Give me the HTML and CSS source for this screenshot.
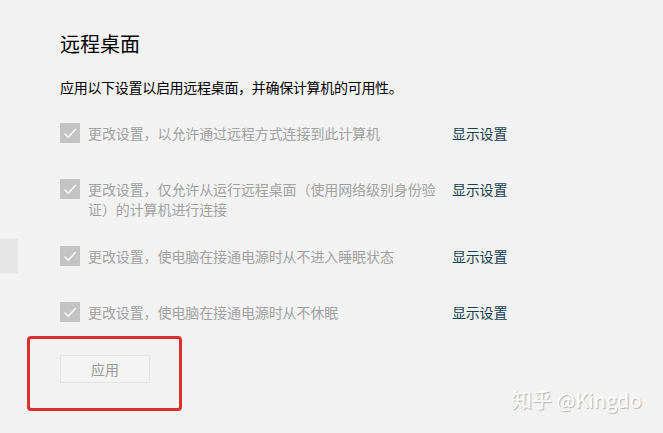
FILE: index.html
```html
<!DOCTYPE html>
<html lang="zh-CN">
<head>
    <meta charset="UTF-8">
    <meta name="viewport" content="width=device-width, initial-scale=1.0">
    <title>远程桌面</title>
    <link rel="stylesheet" href="styles.css">
</head>
<body>
    <div class="side-tab"></div>
    <div class="page">
        <h1 class="title">远程桌面</h1>
        <p class="intro">应用以下设置以启用远程桌面，并确保计算机的可用性。</p>

        <div class="settings">
            <div class="setting">
                <span class="check"><svg viewBox="0 0 20 20" width="20" height="20"><path d="M4.5 10.5 L8.3 14.2 L15.8 6" fill="none" stroke="#fff" stroke-width="1.3"/></svg></span>
                <span class="label">更改设置，以允许通过远程方式连接到此计算机</span>
                <a class="show" href="#">显示设置</a>
            </div>
            <div class="setting">
                <span class="check"><svg viewBox="0 0 20 20" width="20" height="20"><path d="M4.5 10.5 L8.3 14.2 L15.8 6" fill="none" stroke="#fff" stroke-width="1.3"/></svg></span>
                <span class="label">更改设置，仅允许从运行远程桌面（使用网络级别身份验证）的计算机进行连接</span>
                <a class="show" href="#">显示设置</a>
            </div>
            <div class="setting">
                <span class="check"><svg viewBox="0 0 20 20" width="20" height="20"><path d="M4.5 10.5 L8.3 14.2 L15.8 6" fill="none" stroke="#fff" stroke-width="1.3"/></svg></span>
                <span class="label">更改设置，使电脑在接通电源时从不进入睡眠状态</span>
                <a class="show" href="#">显示设置</a>
            </div>
            <div class="setting">
                <span class="check"><svg viewBox="0 0 20 20" width="20" height="20"><path d="M4.5 10.5 L8.3 14.2 L15.8 6" fill="none" stroke="#fff" stroke-width="1.3"/></svg></span>
                <span class="label">更改设置，使电脑在接通电源时从不休眠</span>
                <a class="show" href="#">显示设置</a>
            </div>
        </div>

        <div class="actions">
            <button class="apply" disabled>应用</button>
            <div class="highlight"></div>
        </div>
    </div>
    <div class="watermark">知乎 @Kingdo</div>
</body>
</html>
```

FILE: styles.css
```css
body {
    margin: 0;
    background-color: #f2f2f2;
    font-family: "Noto Sans CJK SC", "Noto Sans", sans-serif;
    color: #000;
    width: 663px;
    height: 433px;
    overflow: hidden;
    position: relative;
}
.page {
    padding: 30px 0 0 60px;
}
.title {
    margin: 0;
    font-size: 20px;
    font-weight: normal;
    line-height: 28px;
}
.intro {
    margin: 19px 0 0;
    font-size: 14px;
    line-height: 20px;
    letter-spacing: -0.3px;
}
.settings {
    margin-top: 26px;
    display: flex;
    flex-direction: column;
    gap: 27px;
}
.setting {
    display: flex;
    align-items: flex-start;
    min-height: 29px;
    font-size: 14px;
    line-height: 20px;
}
.check {
    width: 20px;
    height: 20px;
    flex: none;
    background-color: #c3c3c3;
    display: flex;
}
.label {
    width: 356px;
    margin-left: 8px;
    color: #a2a2a2;
    letter-spacing: -0.1px;
}
.show {
    margin-left: 8px;
    color: #17404f;
    text-decoration: none;
    letter-spacing: -0.2px;
}
.actions {
    position: relative;
    margin-top: 24px;
}
.apply {
    width: 90px;
    height: 28px;
    background-color: #f3f3f3;
    border: 1px solid #e4e4e4;
    color: #9a9a9a;
    font-family: inherit;
    font-size: 14px;
    padding: 0;
}
/* red annotation box drawn over the screenshot */
.highlight {
    position: absolute;
    left: -33px;
    top: -19px;
    width: 149px;
    height: 69px;
    border: 3px solid #dc2f2f;
    border-radius: 4px;
}
.side-tab {
    position: absolute;
    left: 0;
    top: 239px;
    width: 18px;
    height: 34px;
    background-color: #e6e6e6;
}
.watermark {
    position: absolute;
    left: 512px;
    top: 386px;
    font-size: 20px;
    line-height: 28px;
    color: #fff;
    text-shadow: 1px 1px 1px #b0b0b0;
}
```
